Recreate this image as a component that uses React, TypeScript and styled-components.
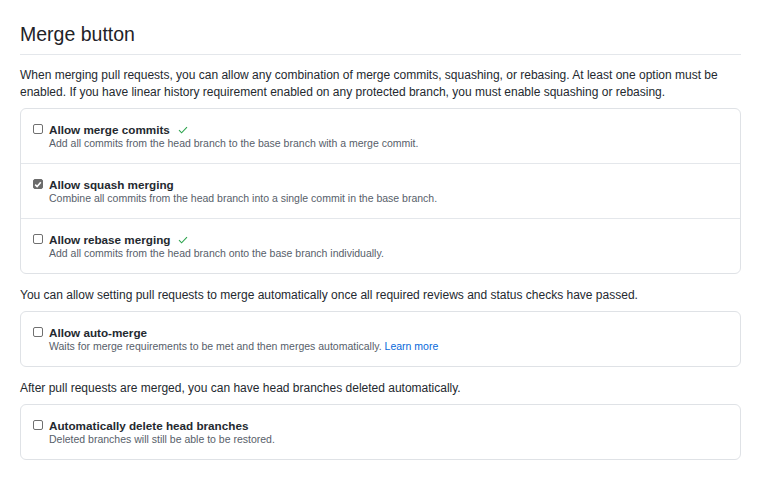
import * as React from "react";
import styled, { createGlobalStyle } from "styled-components";

const GlobalStyle = createGlobalStyle`
  body {
    margin: 0;
    background: #fff;
    font-family: "Liberation Sans", Arial, sans-serif;
    color: #24292f;
  }
`;

const Page = styled.div`
  padding: 20px 16px 20px 20px;
  width: 721px;
`;

const Subhead = styled.div`
  padding-bottom: 6px;
  margin-bottom: 12px;
  border-bottom: 1px solid #e4e7eb;
`;

const Heading = styled.h2`
  margin: 0;
  font-size: 19.5px;
  font-weight: 400;
  line-height: 28px;
  color: #1f2328;
`;

const Note = styled.p`
  margin: 0 0 7px;
  font-size: 12px;
  line-height: 17px;
  color: #24292f;
`;

const Box = styled.div`
  border: 1px solid #dfe2e6;
  border-radius: 6px;
  margin-bottom: 13px;
`;

const Row = styled.label`
  display: flex;
  gap: 6px;
  padding: 13px 12px 13px;

  & + & {
    border-top: 1px solid #e4e7eb;
  }
`;

const Check = styled.span<{ $on?: boolean }>`
  flex: none;
  width: 10px;
  height: 10px;
  margin-top: 2px;
  box-sizing: border-box;
  border-radius: 2px;
  border: 1px solid ${(p) => (p.$on ? "#6b6b6b" : "#707070")};
  background: ${(p) => (p.$on ? "#6b6b6b" : "#fff")};
  display: flex;
  align-items: center;
  justify-content: center;
`;

const Body = styled.div`
  display: flex;
  flex-direction: column;
`;

const Title = styled.div`
  display: flex;
  align-items: center;
  gap: 8px;
  font-size: 11.7px;
  font-weight: 700;
  line-height: 15px;
  color: #24292f;
`;

const Desc = styled.div`
  font-size: 10.5px;
  line-height: 13px;
  color: #57606a;
`;

const LearnMore = styled.a`
  color: #0969da;
  text-decoration: none;
`;

const Tick = () => (
  <svg width="10" height="8" viewBox="0 0 10 8" fill="none">
    <path d="M1 4.2 3.6 6.8 9 1.2" stroke="#2da44e" strokeWidth="1.1" />
  </svg>
);

const BoxTick = () => (
  <svg width="8" height="7" viewBox="0 0 8 7" fill="none">
    <path d="M1.2 3.6 3.1 5.5 6.8 1.3" stroke="#fff" strokeWidth="1.6" />
  </svg>
);

interface OptionProps {
  title: string;
  checked?: boolean;
  tick?: boolean;
  children: React.ReactNode;
}

const Option: React.FC<OptionProps> = ({ title, checked, tick, children }) => (
  <Row>
    <Check $on={checked}>{checked && <BoxTick />}</Check>
    <Body>
      <Title>
        {title}
        {tick && <Tick />}
      </Title>
      <Desc>{children}</Desc>
    </Body>
  </Row>
);

export default function App() {
  return (
    <>
      <GlobalStyle />
      <Page>
        <Subhead>
          <Heading>Merge button</Heading>
        </Subhead>
        <Note>
          When merging pull requests, you can allow any combination of merge
          commits, squashing, or rebasing. At least one option must be enabled.
          If you have linear history requirement enabled on any protected
          branch, you must enable squashing or rebasing.
        </Note>
        <Box>
          <Option title="Allow merge commits" tick>
            Add all commits from the head branch to the base branch with a merge
            commit.
          </Option>
          <Option title="Allow squash merging" checked>
            Combine all commits from the head branch into a single commit in the
            base branch.
          </Option>
          <Option title="Allow rebase merging" tick>
            Add all commits from the head branch onto the base branch
            individually.
          </Option>
        </Box>
        <Note>
          You can allow setting pull requests to merge automatically once all
          required reviews and status checks have passed.
        </Note>
        <Box>
          <Option title="Allow auto-merge">
            Waits for merge requirements to be met and then merges
            automatically. <LearnMore href="#">Learn more</LearnMore>
          </Option>
        </Box>
        <Note>
          After pull requests are merged, you can have head branches deleted
          automatically.
        </Note>
        <Box>
          <Option title="Automatically delete head branches">
            Deleted branches will still be able to be restored.
          </Option>
        </Box>
      </Page>
    </>
  );
}
